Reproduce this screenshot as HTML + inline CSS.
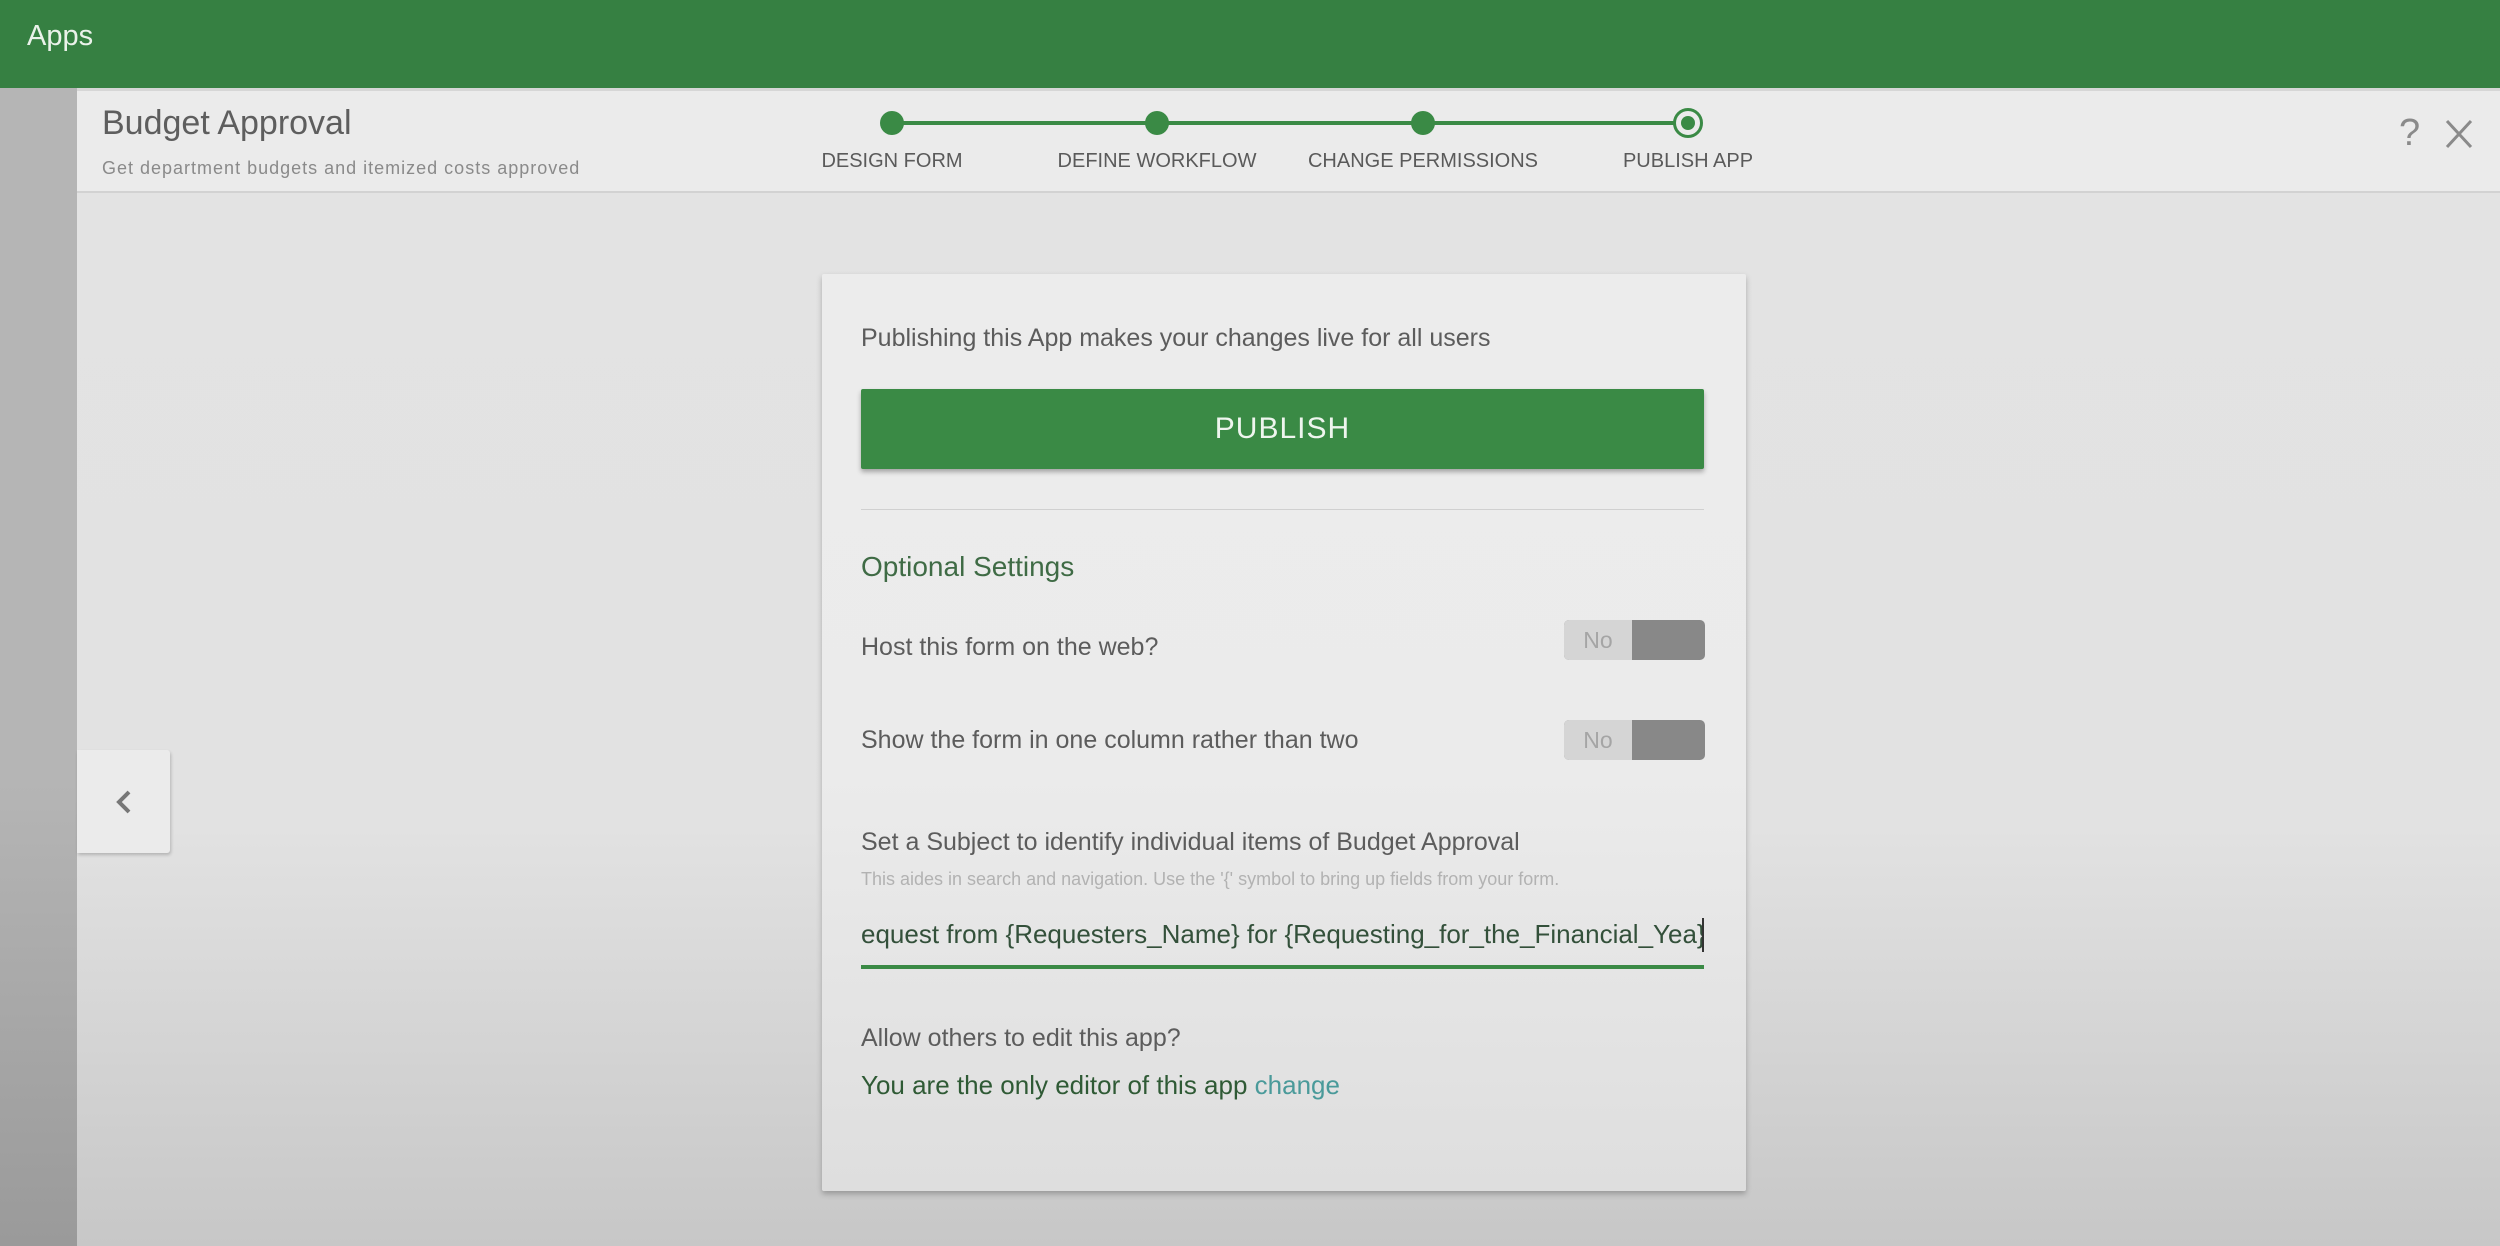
<!DOCTYPE html>
<html><head><meta charset="utf-8"><style>
*{margin:0;padding:0;box-sizing:border-box}
body{width:2500px;height:1246px;overflow:hidden;font-family:"Liberation Sans",sans-serif;background:#e0e0e0;position:relative}
.top{position:absolute;left:0;top:0;width:2500px;height:88px;background:#368042}
.top span{position:absolute;left:27px;top:20px;color:#eaf2ea;font-size:29px}
.strip{position:absolute;left:0;top:88px;width:77px;height:1158px;background:linear-gradient(#b5b5b5 0,#b5b5b5 60%,#9a9a9a 100%)}
.bg{position:absolute;left:77px;top:193px;width:2423px;height:1053px;background:linear-gradient(#e3e3e3 0,#e2e2e2 60%,#c7c7c7 100%)}
.hdr{position:absolute;left:77px;top:88px;width:2423px;height:105px;background:#ebebeb;border-top:3px solid #d6d6d6;border-bottom:2px solid #d2d2d2}
.t{position:absolute;left:102px;top:104px;font-size:34px;color:#5e5e5e}
.st{position:absolute;left:102px;top:158px;font-size:18px;color:#8a8a8a;letter-spacing:1px}
.line{position:absolute;top:121px;height:4px;background:#3a8a45;left:892px;width:796px}
.dot{position:absolute;width:24px;height:24px;border-radius:50%;background:#3a8a45;top:111px}
.ring{position:absolute;width:30px;height:30px;border-radius:50%;border:3px solid #3a8a45;background:#ebebeb;top:108px;left:1673px}
.ring::after{content:"";position:absolute;left:5px;top:5px;width:14px;height:14px;border-radius:50%;background:#3a8a45}
.lbl{position:absolute;top:150px;font-size:20px;color:#5a5a5a;transform:translateX(-50%);white-space:nowrap}
.ic{position:absolute;top:112px;font-size:38px;color:#8a8a8a}
.card{position:absolute;left:822px;top:274px;width:924px;height:917px;background:linear-gradient(#ececec 0,#ebebeb 55%,#dedede 100%);box-shadow:0 3px 6px rgba(0,0,0,.25);border-radius:2px}
.c{position:absolute;left:39px;white-space:nowrap}
.btn{position:absolute;left:39px;top:115px;width:843px;height:80px;background:#3a8a45;box-shadow:0 3px 5px rgba(0,0,0,.3);border-radius:2px;color:#eef5ee;font-size:30px;text-align:center;line-height:80px;letter-spacing:1px}
.div{position:absolute;left:39px;top:235px;width:843px;height:1px;background:#d0d0d0}
.tg{position:absolute;left:742px;width:141px;height:40px;border-radius:5px;overflow:hidden;background:#888}
.tg i{position:absolute;left:0;top:0;width:68px;height:40px;background:#d5d5d5;color:#a5a5a5;font-style:normal;font-size:23px;text-align:center;line-height:40px}
.back{position:absolute;left:77px;top:750px;width:93px;height:103px;background:#ebebeb;box-shadow:1px 2px 3px rgba(0,0,0,.2);border-radius:0 3px 3px 0}
</style></head><body>
<div class="top"><span>Apps</span></div>
<div class="strip"></div>
<div class="bg"></div>
<div class="hdr"></div>
<div class="t">Budget Approval</div>
<div class="st">Get department budgets and itemized costs approved</div>
<div class="line"></div>
<div class="dot" style="left:880px"></div>
<div class="dot" style="left:1145px"></div>
<div class="dot" style="left:1411px"></div>
<div class="ring"></div>
<div class="lbl" style="left:892px">DESIGN FORM</div>
<div class="lbl" style="left:1157px">DEFINE WORKFLOW</div>
<div class="lbl" style="left:1423px">CHANGE PERMISSIONS</div>
<div class="lbl" style="left:1688px">PUBLISH APP</div>
<div class="ic" style="left:2399px">?</div>
<svg style="position:absolute;left:2445px;top:119px" width="28" height="30"><path d="M2 2L26 28M26 2L2 28" stroke="#8a8a8a" stroke-width="3"/></svg>
<div class="back"><svg style="position:absolute;left:37px;top:40px" width="20" height="24"><path d="M15 2L5 12L15 22" fill="none" stroke="#777" stroke-width="4"/></svg></div>
<div class="card">
<div class="c" style="top:50px;font-size:25px;color:#5c5c5c">Publishing this App makes your changes live for all users</div>
<div class="btn">PUBLISH</div>
<div class="div"></div>
<div class="c" style="top:277px;font-size:28px;color:#3f6b45">Optional Settings</div>
<div class="c" style="top:359px;font-size:25px;color:#5c5c5c">Host this form on the web?</div>
<div class="tg" style="top:346px"><i>No</i></div>
<div class="c" style="top:452px;font-size:25px;color:#5c5c5c">Show the form in one column rather than two</div>
<div class="tg" style="top:446px"><i>No</i></div>
<div class="c" style="top:554px;font-size:25px;color:#5c5c5c">Set a Subject to identify individual items of Budget Approval</div>
<div class="c" style="top:595px;font-size:18px;color:#b2b2b2">This aides in search and navigation. Use the '{' symbol to bring up fields from your form.</div>
<div class="c" style="top:645px;font-size:26px;color:#33503a;width:843px;overflow:hidden">equest from {Requesters_Name} for {Requesting_for_the_Financial_Yea}</div>
<div style="position:absolute;left:880px;top:644px;width:2px;height:34px;background:#333"></div>
<div style="position:absolute;left:39px;top:691px;width:843px;height:4px;background:#3a8a45"></div>
<div class="c" style="top:750px;font-size:25px;color:#5c5c5c">Allow others to edit this app?</div>
<div class="c" style="top:796px;font-size:26px;color:#2f5a35">You are the only editor of this app <span style="color:#4a9a9a">change</span></div>
</div>
</body></html>
